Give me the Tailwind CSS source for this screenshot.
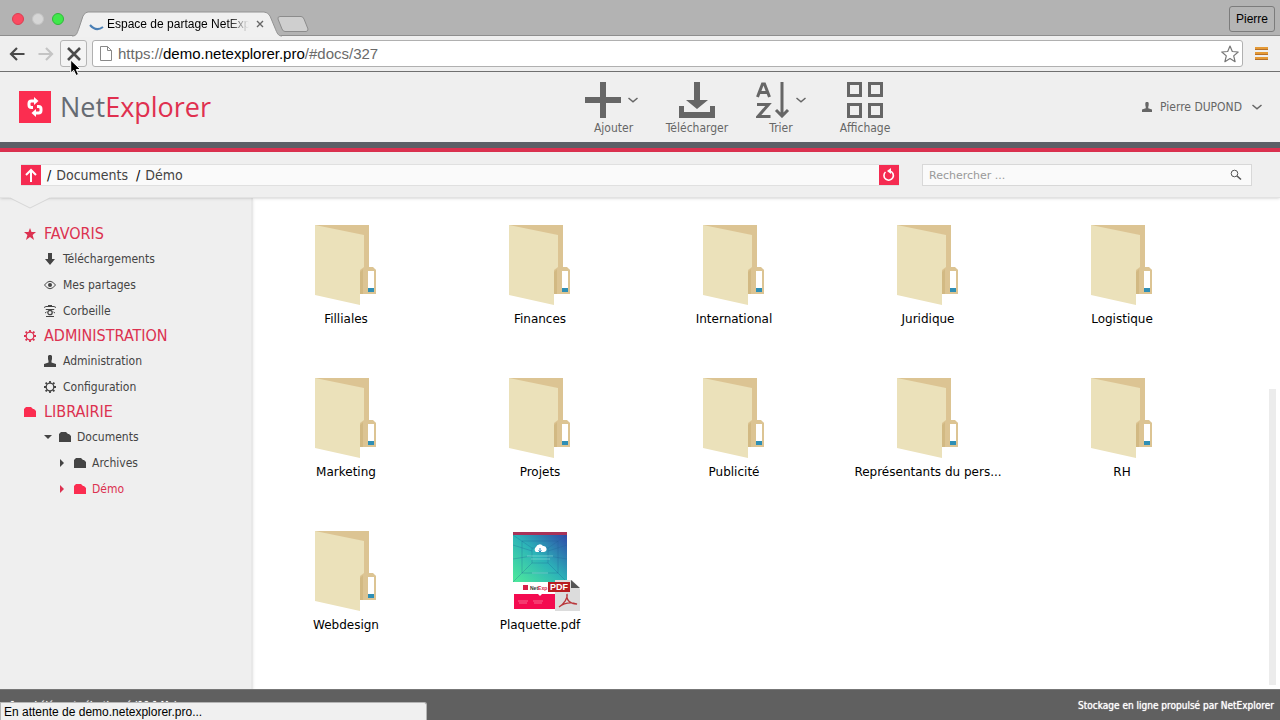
<!DOCTYPE html>
<html lang="fr">
<head>
    <meta charset="UTF-8">
    <meta name="viewport" content="width=device-width, initial-scale=1.0">
    <title>Espace de partage NetExplorer</title>
    <script src="https://cdn.jsdelivr.net/npm/@tailwindcss/browser@4"></script>
</head>
<body class="h-screen flex flex-col overflow-hidden bg-white text-[#555] font-['DejaVu_Sans_Condensed','DejaVu_Sans',sans-serif] text-xs">

    <!-- Shared symbols -->
    <svg class="hidden">
        <symbol id="folder-big" viewBox="0 0 62 80">
            <path d="M0 0H54V42L61 45V69H46L0 6Z" fill="#dcc493"/>
            <path d="M0 0L49 10V44L45 46V80L0 70Z" fill="#ebe1ba"/>
            <path d="M45 45L49 42H58L61 45V69H45Z" fill="#dcc493"/>
            <path d="M45 47L48 44V69H45Z" fill="#d2b983"/>
            <path d="M53 46H59V67H53Z" fill="#fff"/>
            <path d="M53 63H59V67H53Z" fill="#2f8fb5"/>
        </symbol>
        <symbol id="folder-small" viewBox="0 0 12 10">
            <path d="M0 10V2L2 0H7L9 2H10L12 4V10Z" fill="currentColor"/>
        </symbol>
        <symbol id="gear" viewBox="0 0 12 12">
            <circle cx="6" cy="6" r="3.8" fill="none" stroke="currentColor" stroke-width="1.3"/>
            <path d="M6 0V2M6 10V12M0 6H2M10 6H12M1.6 1.6L3 3M9 9L10.4 10.4M1.6 10.4L3 9M9 3L10.4 1.6" stroke="currentColor" stroke-width="1.8"/>
        </symbol>
        <symbol id="person" viewBox="0 0 12 12">
            <path d="M4 1L5 0H7L8 1V4L7.500 6V7.500L12 9V12H0V9L4.500 7.500V6L4 4V1Z" fill="currentColor"/>
        </symbol>
        <symbol id="chevron" viewBox="0 0 10 6">
            <path d="M.5 1L5 4.800L9.500 1" fill="none" stroke="currentColor" stroke-width="1.500"/>
        </symbol>
    </svg>

    <!-- Browser tab strip -->
    <div class="relative h-9 shrink-0 flex items-center bg-[#b3b3b3] border-b border-[#8e8e8e] pt-0.5 pl-3 pr-[5px] font-['Liberation_Sans',sans-serif] text-black">
        <div class="flex gap-2">
            <span class="size-3 rounded-full bg-[#fb4a61] border border-[#d93f52]"></span>
            <span class="size-3 rounded-full bg-[#d6d6d6] border border-[#c4c4c4]"></span>
            <span class="size-3 rounded-full bg-[#40e84b] border border-[#2fb83a]"></span>
        </div>
        <div class="absolute left-[72px] top-[11px] w-[210px] h-[25px]">
            <svg class="absolute inset-0" width="210" height="26" viewBox="0 0 210 26">
                <path d="M0 25C5 25 5 22 7 17L11 5Q13 1 16 1H192Q196 1 198 5L203 17C205 22 206 25 210 25V26H0Z" fill="#f0f0f0"/>
                <path d="M0 25C5 25 5 22 7 17L11 5Q13 1 16 1H192Q196 1 198 5L203 17C205 22 206 25 210 25" fill="none" stroke="#929292"/>
            </svg>
            <div class="relative flex items-center h-full pl-[17px]">
                <svg class="w-[18px] h-4 shrink-0" viewBox="0 0 18 16"><path d="M1 9Q7 16 14 11" fill="none" stroke="#4a7fb5" stroke-width="2"/></svg>
                <span class="w-[142px] overflow-hidden whitespace-nowrap text-xs bg-linear-to-r from-black from-85% to-transparent bg-clip-text text-transparent">Espace de partage NetExplorer</span>
                <button aria-label="Fermer l'onglet" class="ml-[7px]"><svg class="size-2" viewBox="0 0 8 8"><path d="M1 1L7 7M7 1L1 7" stroke="#666" stroke-width="1.4"/></svg></button>
            </div>
        </div>
        <button aria-label="Nouvel onglet" class="absolute left-[277px] top-4"><svg width="32" height="16" viewBox="0 0 32 16"><path d="M3 .5H24Q26 .5 27 3L31 13Q31 15.500 29 15.500H8Q6 15.500 5 13L1 3Q.5 .5 3 .5Z" fill="#cfcfcf" stroke="#8c8c8c"/></svg></button>
        <button class="ml-auto h-[26px] px-1.5 border border-[#7c7c7c] rounded-[3px] bg-[#b5b5b5] text-xs">Pierre</button>
    </div>

    <!-- Address bar -->
    <div class="h-9 shrink-0 flex items-center bg-[#efefef] border-b border-[#707070] pl-[9px] pr-3 font-['Liberation_Sans',sans-serif]">
        <button aria-label="Précédent" class="w-[22px]"><svg class="w-4 h-3.5" viewBox="0 0 16 14"><path d="M15.500 7H2.500M8 1L2 7L8 13" fill="none" stroke="#4a4a4a" stroke-width="2.200"/></svg></button>
        <button aria-label="Suivant" class="w-[22px] ml-[7px]"><svg class="w-4 h-3.5" viewBox="0 0 16 14"><path d="M.5 7H13.500M8 1L14 7L8 13" fill="none" stroke="#c4c4c4" stroke-width="2.200"/></svg></button>
        <button aria-label="Arrêter" class="relative w-[27px] h-[27px] flex items-center justify-center border border-[#b5b5b5] rounded-[3px] bg-[#f4f4f4]">
            <svg class="size-3.5" viewBox="0 0 14 14"><path d="M1 1L13 13M13 1L1 13" stroke="#4a4a4a" stroke-width="2.600"/></svg>
            <svg class="absolute left-[9px] top-[18px] z-10" width="12" height="18" viewBox="0 0 12 18"><path d="M.7 1V14L3.700 11.300L6 16.500L8.500 15.400L6.300 10.500H10.500Z" fill="#000" stroke="#fff"/></svg>
        </button>
        <div class="flex-1 ml-[5px] h-[27px] flex items-center bg-white border border-[#b0b0b0] rounded-[3px] px-[7px]">
            <svg class="w-3 h-[15px] shrink-0" viewBox="0 0 12 15"><path d="M.5 .5H7.500L11.500 4.500V14.500H.5ZM7.500 .5V4.500H11.500" fill="#fff" stroke="#888"/></svg>
            <a href="#docs/327" class="ml-1.5 text-[15px] leading-none text-[#6a6a6a]">https://<span class="text-black">demo.netexplorer.pro</span>/#docs/327</a>
            <button aria-label="Ajouter aux favoris" class="ml-auto -mr-1"><svg class="size-[18px]" viewBox="0 0 18 18"><path d="M9 1L11.300 6.500L17.200 7L12.700 10.900L14.100 16.700L9 13.600L3.900 16.700L5.300 10.900L.8 7L6.700 6.500Z" fill="#fff" stroke="#777" stroke-width="1.200" stroke-linejoin="round"/></svg></button>
        </div>
        <button aria-label="Menu" class="ml-3"><svg class="w-[13px] h-3.5" viewBox="0 0 13 14"><path d="M0 1.500H13M0 6.500H13M0 11.500H13" stroke="#e59a35" stroke-width="3"/><path d="M0 2.500H13M0 7.500H13M0 12.500H13" stroke="#b5702a"/></svg></button>
    </div>

    <!-- App header -->
    <header class="relative h-[70px] shrink-0 flex items-center bg-[#efefef] pl-[19px] pr-[18px]">
        <a href="#" aria-label="NetExplorer" class="flex items-center">
            <svg class="size-8" viewBox="0 0 32 32">
                <path d="M0 0H32V32H0Z" fill="#fb2d50"/>
                <path d="M14 16.500H12.500Q10 16.500 10 14V12.500Q10 10 12.500 10H16" fill="none" stroke="#fff" stroke-width="3"/>
                <path d="M15 6L19.500 10L15 14Z" fill="#fff"/>
                <path d="M18 15.500H19.500Q22 15.500 22 18V19.500Q22 22 19.500 22H16" fill="none" stroke="#fff" stroke-width="3"/>
                <path d="M17 18L12.500 22L17 26Z" fill="#fff"/>
            </svg>
            <span class="ml-[9px] text-[27px] leading-8 text-[#666b73] font-['Open_Sans',sans-serif]">Net<span class="text-[#e0304f] font-medium">Explorer</span></span>
        </a>
        <nav class="absolute left-[585px] top-[10px] flex text-[#666] text-xs">
            <button class="w-[57px] flex flex-col items-center">
                <span class="w-full flex items-center justify-between pr-1">
                    <svg class="size-9" viewBox="0 0 36 36"><path d="M15 0H21V15H36V21H21V36H15V21H0V15H15Z" fill="currentColor"/></svg>
                    <svg class="w-2.5 h-1.5"><use href="#chevron"/></svg>
                </span>
                <span class="mt-0.5">Ajouter</span>
            </button>
            <button class="w-[64px] ml-[23px] flex flex-col items-center">
                <svg class="size-9" viewBox="0 0 36 36"><path d="M15 0H21V18H29L18 27L7 18H15ZM0 24H5V30H31V24H36V36H0Z" fill="currentColor"/></svg>
                <span class="mt-0.5">Télécharger</span>
            </button>
            <button class="w-[50px] ml-[27px] flex flex-col items-center">
                <span class="w-full flex items-center justify-between">
                    <svg class="size-9" viewBox="0 0 36 36"><path d="M1.500 15L6.500 2H8.500L13.500 15M4 10.500H11M1 22.500H12.500L2 34.500H14.500" fill="none" stroke="currentColor" stroke-width="3"/><path d="M26 0V34M20 28L26 34L32 28" fill="none" stroke="currentColor" stroke-width="3"/></svg>
                    <svg class="w-2.5 h-1.5"><use href="#chevron"/></svg>
                </span>
                <span class="mt-0.5">Trier</span>
            </button>
            <button class="w-[52px] ml-[33px] flex flex-col items-center">
                <svg class="size-9" viewBox="0 0 36 36"><path d="M1.500 1.500H13.500V13.500H1.500ZM22.500 1.500H34.500V13.500H22.500ZM1.500 22.500H13.500V34.500H1.500ZM22.500 22.500H34.500V34.500H22.500Z" fill="none" stroke="currentColor" stroke-width="3"/></svg>
                <span class="mt-0.5">Affichage</span>
            </button>
        </nav>
        <button class="ml-auto flex items-center text-[#666]">
            <svg class="size-[10px] mr-2"><use href="#person"/></svg>
            Pierre DUPOND
            <svg class="w-2.5 h-1.5 ml-2.5"><use href="#chevron"/></svg>
        </button>
    </header>
    <div class="h-1.5 shrink-0 bg-[#5c5f66]"></div>
    <div class="h-1 shrink-0 bg-[#dc3150]"></div>

    <!-- Breadcrumb and search -->
    <div class="relative z-10 h-[46px] shrink-0 flex items-center bg-[#efefef] border-b border-[#e2e2e2] shadow-sm pl-[21px] pr-7">
        <div class="flex-1 flex items-center bg-[#fafafa] border-y border-[#e0e0e0] text-sm text-[#444]">
            <button aria-label="Dossier parent" class="size-5 flex items-center justify-center bg-[#f52b51]"><svg class="w-3 h-3.5" viewBox="0 0 12 14"><path d="M6 14V2M1 7L6 2L11 7" fill="none" stroke="#fff" stroke-width="2"/></svg></button>
            <span class="ml-1.5 text-black">/</span><a href="#" class="ml-[5px]">Documents</a>
            <span class="ml-2 text-black">/</span><a href="#" class="ml-[5px]">Démo</a>
            <button aria-label="Actualiser" class="ml-auto size-5 flex items-center justify-center bg-[#f52b51]"><svg class="size-3.5" viewBox="0 0 14 14"><path d="M3.500 4A4.700 4.700 0 1 0 8 3" fill="none" stroke="#fff" stroke-width="1.600"/><path d="M9 0V6L5 3Z" fill="#fff"/></svg></button>
        </div>
        <div class="relative w-[330px] ml-[23px]">
            <input type="search" aria-label="Rechercher" placeholder="Rechercher ..." class="block w-full h-[22px] px-1.5 pt-0.5 bg-[#fafafa] border border-[#d8d8d8] text-[11px] font-['DejaVu_Sans',sans-serif] placeholder:text-[#999]">
            <svg class="absolute right-2.5 top-[5px]" width="12" height="12" viewBox="0 0 12 12"><circle cx="4.500" cy="4.500" r="3.300" fill="none" stroke="#555"/><path d="M7 7L11 10.500" stroke="#555" stroke-width="1.600"/></svg>
        </div>
        <svg class="absolute left-[9px] top-[45px]" width="42" height="12" viewBox="0 0 42 12"><path d="M0 0L21 11L42 0" fill="#efefef"/><path d="M1 1L21 11L41 1" fill="none" stroke="#d6d6d6"/></svg>
    </div>

    <div class="flex-1 min-h-0 flex">
        <!-- Sidebar -->
        <aside class="w-[253px] shrink-0 bg-[#efefef] border-r-2 border-[#e8e8e8] shadow-sm pt-6 text-[#444]">
            <h2 class="h-6 flex items-center pl-6 text-base text-[#dc3150]">
                <svg class="size-3 mr-2" viewBox="0 0 12 12"><path d="M6 0L7.500 4H12L8.600 7L10 12L6 9L2 12L3.400 7L0 4H4.500Z" fill="currentColor"/></svg>FAVORIS</h2>
            <ul>
                <li class="h-[26px] flex items-center pl-11"><svg class="size-3 mr-[7px]" viewBox="0 0 12 12"><path d="M4 0H8V6H11L6 12L1 6H4Z" fill="currentColor"/></svg><a href="#">Téléchargements</a></li>
                <li class="h-[26px] flex items-center pl-11"><svg class="size-3 mr-[7px]" viewBox="0 0 12 12"><path d="M.5 6Q6-1.500 11.500 6Q6 13.500.5 6Z" fill="none" stroke="currentColor"/><circle cx="6" cy="6" r="2" fill="currentColor"/></svg><a href="#">Mes partages</a></li>
                <li class="h-[26px] flex items-center pl-11"><svg class="size-3 mr-[7px]" viewBox="0 0 12 12"><path d="M0 2.500L2 1.500H10L12 2.500M4 .5H8M2 5V4.500H10V5M1 8L2.500 7M11 8L9.500 7M2 11.500H10" fill="none" stroke="currentColor"/><circle cx="6" cy="7.500" r="2.200" fill="none" stroke="currentColor" stroke-width="1.300"/></svg><a href="#">Corbeille</a></li>
            </ul>
            <h2 class="h-6 flex items-center pl-6 text-base text-[#dc3150]"><svg class="size-3 mr-2"><use href="#gear"/></svg>ADMINISTRATION</h2>
            <ul>
                <li class="h-[26px] flex items-center pl-11"><svg class="size-3 mr-[7px]"><use href="#person"/></svg><a href="#">Administration</a></li>
                <li class="h-[26px] flex items-center pl-11"><svg class="size-3 mr-[7px]"><use href="#gear"/></svg><a href="#">Configuration</a></li>
            </ul>
            <h2 class="h-6 flex items-center pl-6 text-base text-[#dc3150]"><svg class="w-3 h-2.5 mr-2 text-[#fb2d50]"><use href="#folder-small"/></svg>LIBRAIRIE</h2>
            <ul>
                <li class="h-[26px] flex items-center pl-11"><svg class="w-2 h-1 mr-[7px]" viewBox="0 0 8 4"><path d="M0 0H8L4 4Z" fill="currentColor"/></svg><svg class="w-3 h-2.5 mr-1.5"><use href="#folder-small"/></svg><a href="#">Documents</a></li>
                <li class="h-[26px] flex items-center pl-[60px]"><svg class="w-1 h-2 mr-[10px]" viewBox="0 0 4 8"><path d="M0 0V8L4 4Z" fill="currentColor"/></svg><svg class="w-3 h-2.5 mr-1.5"><use href="#folder-small"/></svg><a href="#">Archives</a></li>
                <li class="h-[26px] flex items-center pl-[60px] text-[#dc3150]"><svg class="w-1 h-2 mr-[10px]" viewBox="0 0 4 8"><path d="M0 0V8L4 4Z" fill="currentColor"/></svg><svg class="w-3 h-2.5 mr-1.5 text-[#fb2d50]"><use href="#folder-small"/></svg><a href="#">Démo</a></li>
            </ul>
        </aside>

        <!-- Files -->
        <main class="relative flex-1 pt-[27px] pr-[65px] text-black font-['DejaVu_Sans',sans-serif]">
            <ul class="grid grid-cols-5 gap-x-2 gap-y-[49px] text-center">
                <li class="flex flex-col items-center h-[104px]"><svg class="w-[62px] h-20"><use href="#folder-big"/></svg><span class="mt-1.5">Filliales</span></li>
                <li class="flex flex-col items-center h-[104px]"><svg class="w-[62px] h-20"><use href="#folder-big"/></svg><span class="mt-1.5">Finances</span></li>
                <li class="flex flex-col items-center h-[104px]"><svg class="w-[62px] h-20"><use href="#folder-big"/></svg><span class="mt-1.5">International</span></li>
                <li class="flex flex-col items-center h-[104px]"><svg class="w-[62px] h-20"><use href="#folder-big"/></svg><span class="mt-1.5">Juridique</span></li>
                <li class="flex flex-col items-center h-[104px]"><svg class="w-[62px] h-20"><use href="#folder-big"/></svg><span class="mt-1.5">Logistique</span></li>
                <li class="flex flex-col items-center h-[104px]"><svg class="w-[62px] h-20"><use href="#folder-big"/></svg><span class="mt-1.5">Marketing</span></li>
                <li class="flex flex-col items-center h-[104px]"><svg class="w-[62px] h-20"><use href="#folder-big"/></svg><span class="mt-1.5">Projets</span></li>
                <li class="flex flex-col items-center h-[104px]"><svg class="w-[62px] h-20"><use href="#folder-big"/></svg><span class="mt-1.5">Publicité</span></li>
                <li class="flex flex-col items-center h-[104px]"><svg class="w-[62px] h-20"><use href="#folder-big"/></svg><span class="mt-1.5">Représentants du pers...</span></li>
                <li class="flex flex-col items-center h-[104px]"><svg class="w-[62px] h-20"><use href="#folder-big"/></svg><span class="mt-1.5">RH</span></li>
                <li class="flex flex-col items-center h-[104px]"><svg class="w-[62px] h-20"><use href="#folder-big"/></svg><span class="mt-1.5">Webdesign</span></li>
                <li class="flex flex-col items-center h-[104px]">
                    <svg class="w-20 h-20 font-['Liberation_Sans',sans-serif]" viewBox="0 0 80 80">
                        <defs>
                            <linearGradient id="cover" x1="0" y1="1" x2="1" y2="0">
                                <stop offset="0" stop-color="#4feb9a"/>
                                <stop offset=".5" stop-color="#2cb3b8"/>
                                <stop offset="1" stop-color="#2f45a8"/>
                            </linearGradient>
                        </defs>
                        <path d="M13 2H67V51H13Z" fill="url(#cover)"/>
                        <path d="M13 4L32 17H48L67 4M13 51L32 32H48L67 51M32 17V32M48 17V32M13 14L32 20M13 28L32 25M67 14L48 20M67 28L48 25M22 10V42M58 10V42M22 10H58M22 42H58" fill="none" stroke="#1d5f94" stroke-opacity=".3"/>
                        <path d="M13 1H67V4H13Z" fill="#a83258"/>
                        <path d="M36 21A3 3 0 0 1 36 16A4 4 0 0 1 43 15A3 3 0 0 1 44 21Z" fill="#fff"/>
                        <path d="M40 17V21M38.500 19.500L40 21L41.500 19.500" fill="none" stroke="#2a7fb8"/>
                        <path d="M27 25H53M31 28H50M32 42H48" stroke="#8fe3dc" stroke-opacity=".6"/>
                        <path d="M13 51H67V62H13Z" fill="#fff"/>
                        <path d="M23 54H28V59H23Z" fill="#d81f48"/>
                        <text x="30" y="59" font-size="5" font-weight="bold" fill="#333">Net<tspan fill="#d81f48">Exp</tspan></text>
                        <path d="M14 63H38L40 65L42 63H67V78H14Z" fill="#f40b50"/>
                        <path d="M18 70H28M33 70H43M19 72H27M34 72H42" stroke="#f9809f" stroke-width=".8"/>
                        <path d="M55 49H72L80 58V80H55Z" fill="#dcdcdc"/>
                        <path d="M71 49L80 57H71Z" fill="#555"/>
                        <path d="M48 51H70V61H48Z" fill="#b71c20"/>
                        <text x="50" y="59" font-size="9" font-weight="bold" fill="#fff">PDF</text>
                        <path d="M59 76C64 73 68 67 67 63C66 69 70 73 77 73C71 71 64 72 59 76Z" fill="none" stroke="#b9363a" stroke-width="1.300"/>
                    </svg>
                    <span class="mt-1.5">Plaquette.pdf</span>
                </li>
            </ul>
            <div class="absolute right-1 bottom-1 w-[7px] h-[296px] bg-[#ececec]"></div>
        </main>
    </div>

    <!-- Footer -->
    <footer class="relative h-[31px] shrink-0 flex items-center justify-between bg-[#606060] border-t border-[#777] pt-0.5 px-1.5 pl-2.5 text-white text-[10px] [text-shadow:0_0_1px_#fff]">
        <span>1 seul élément sélectionné (10.1 Mo)</span>
        <span>Stockage en ligne propulsé par NetExplorer</span>
        <div class="absolute left-0 bottom-0 w-[427px] h-[18px] pl-[3px] flex items-center bg-[#f0f0f0] border border-[#b5b5b5] border-b-0 rounded-tr-[3px] text-black text-xs [text-shadow:none] font-['Liberation_Sans',sans-serif]">En attente de demo.netexplorer.pro...</div>
    </footer>
</body>
</html>
